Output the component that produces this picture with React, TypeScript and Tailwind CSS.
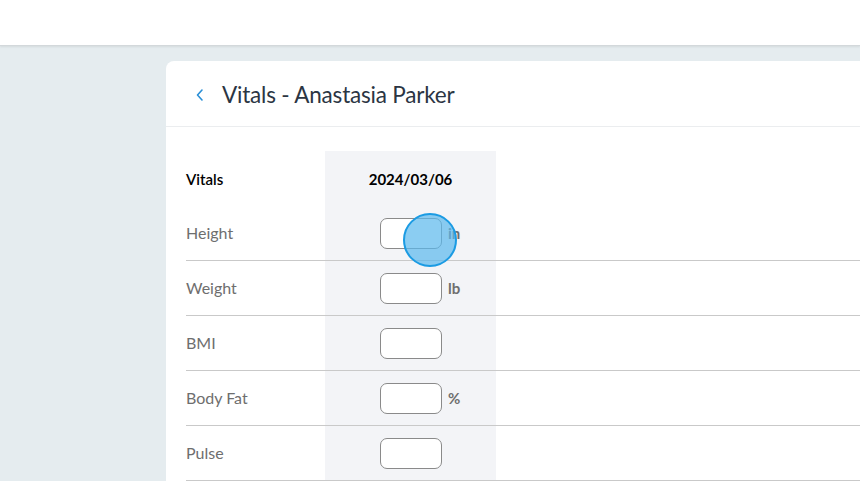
import React from 'react'

const rows = [
  { label: 'Height', unit: 'in' },
  { label: 'Weight', unit: 'lb' },
  { label: 'BMI', unit: '' },
  { label: 'Body Fat', unit: '%' },
  { label: 'Pulse', unit: '' },
]

function Row({ label, unit }: { label: string; unit: string }) {
  return (
    <div className="flex h-[55px] border-b border-[#c9c9c9]">
      <div className="w-[139px] flex items-center text-[16px] text-[#6e6e6e]">{label}</div>
      <div className="w-[171px] bg-[#f3f4f7] flex items-center pl-[55px] gap-[6px]">
        <input className="w-[62px] h-[31px] rounded-[7px] border border-[#8a8a8a] bg-white outline-none" />
        <span className="text-[15px] font-bold text-[#6e6e6e]">{unit}</span>
      </div>
      <div className="flex-1" />
    </div>
  )
}

export default function App() {
  return (
    <div className="relative w-[860px] h-[481px] overflow-hidden bg-[#e5ecef]" style={{ fontFamily: 'Lato, "Noto Sans", sans-serif' }}>
      <div className="h-[46px] bg-white border-b border-[#d3d8db] shadow-[0_1px_2px_rgba(0,0,0,0.08)]" />
      <div className="ml-[166px] mt-[15px] bg-white rounded-tl-[8px] h-[440px]">
        <div className="h-[66px] flex items-center pl-[28px] pt-[2px] border-b border-[#ebedef]">
          <svg width="12" height="16" viewBox="0 0 12 16" className="mr-[16px]">
            <path d="M8 3 L3.5 8 L8 13" fill="none" stroke="#2a8fd6" strokeWidth="1.6" strokeLinecap="round" strokeLinejoin="round" />
          </svg>
          <h1 className="text-[22.5px] text-[#2b3543] tracking-[-0.2px]">Vitals - Anastasia Parker</h1>
        </div>
        <div className="pl-[20px] pt-[24px]">
          <div className="flex h-[55px] pt-[2px]">
            <div className="w-[139px] flex items-center text-[15px] font-semibold text-black">Vitals</div>
            <div className="w-[171px] bg-[#f3f4f7] flex items-center justify-center text-[15px] font-bold text-black -mt-[2px] pt-[2px]">2024/03/06</div>
          </div>
          {rows.map((r) => (
            <Row key={r.label} label={r.label} unit={r.unit} />
          ))}
        </div>
      </div>
      <div className="absolute left-[403px] top-[213px] w-[54px] h-[54px] rounded-full bg-[#5ab8ec]/70 border-2 border-[#1b9be3]" />
    </div>
  )
}
